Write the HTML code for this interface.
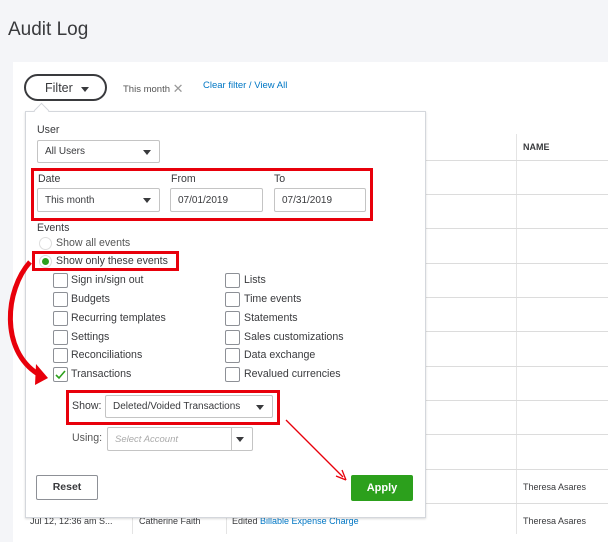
<!DOCTYPE html>
<html><head><style>
*{box-sizing:border-box;margin:0;padding:0}
body{width:608px;height:534px;overflow:hidden;background:#f4f5f8;font-family:"Liberation Sans",sans-serif;color:#393a3d;position:relative;font-size:10px}
.a{position:absolute}
.card{left:13px;top:62px;width:600px;height:480px;background:#fff}
.hl{height:1px;background:#dcdcdc;left:426px;width:182px}
.sel{border:1px solid #c4c4c4;border-radius:2px;background:#fff;font-size:10px;padding-left:7px;display:flex;align-items:center}
.tri{position:absolute;right:8px;top:50%;margin-top:-2px;border-left:4px solid transparent;border-right:4px solid transparent;border-top:5px solid #393a3d}
.cb{width:15px;height:15px;border:1px solid #8d9096;border-radius:2px;background:#fff}
.lab{font-size:10.6px;color:#393a3d}
.red{border:3px solid #e8000b}
</style></head><body>
<div class="a" style="left:8px;top:19px;font-size:19px;color:#393a3d">Audit Log</div>
<div class="a card"></div>
<div class="a" style="left:516px;top:134px;width:1px;height:400px;background:#e4e4e4"></div>
<div class="a" style="left:523px;top:142px;font-size:9px;font-weight:bold">NAME</div>
<div class="a hl" style="top:160px"></div><div class="a hl" style="top:194px"></div><div class="a hl" style="top:228px"></div><div class="a hl" style="top:263px"></div><div class="a hl" style="top:297px"></div><div class="a hl" style="top:331px"></div><div class="a hl" style="top:366px"></div><div class="a hl" style="top:400px"></div><div class="a hl" style="top:434px"></div><div class="a hl" style="top:469px"></div><div class="a hl" style="top:503px"></div>
<div class="a" style="left:523px;top:482px;font-size:9px">Theresa Asares</div>
<div class="a" style="left:523px;top:516px;font-size:9px">Theresa Asares</div>
<div class="a" style="left:132px;top:510px;width:1px;height:24px;background:#e4e4e4"></div>
<div class="a" style="left:226px;top:510px;width:1px;height:24px;background:#e4e4e4"></div>
<div class="a" style="left:30px;top:516px;font-size:9px">Jul 12, 12:36 am S...</div>
<div class="a" style="left:139px;top:516px;font-size:9px">Catherine Faith</div>
<div class="a" style="left:232px;top:516px;font-size:9px">Edited <span style="color:#0077c5">Billable Expense Charge</span></div>

<div class="a" style="left:24px;top:74px;width:83px;height:27px;border:2px solid #393a3d;border-radius:14px;font-size:12.5px;padding:5px 0 0 19px">Filter</div>
<div class="a tri" style="left:81px;right:auto;top:87px;margin:0"></div>
<div class="a" style="left:123px;top:80px;font-size:9.5px;color:#555">This month <span style="font-size:13px;color:#999;position:relative;top:1px">✕</span></div>
<div class="a" style="left:203px;top:80px;font-size:9.5px;color:#0077c5">Clear filter / View All</div>

<div class="a" style="left:25px;top:111px;width:401px;height:407px;border:1px solid #d4d7dc;background:#fff;box-shadow:0 1px 2px rgba(0,0,0,.15)"></div>
<div class="a" style="left:36px;top:105px;width:11px;height:11px;background:#fff;border-left:1px solid #d4d7dc;border-top:1px solid #d4d7dc;transform:rotate(45deg)"></div>

<div class="a lab" style="left:37px;top:124px">User</div>
<div class="a sel" style="left:37px;top:140px;width:123px;height:23px">All Users<span class="tri"></span></div>
<div class="a red" style="left:31px;top:168px;width:342px;height:53px"></div>
<div class="a lab" style="left:38px;top:173px">Date</div>
<div class="a lab" style="left:171px;top:173px">From</div>
<div class="a lab" style="left:274px;top:173px">To</div>
<div class="a sel" style="left:37px;top:188px;width:123px;height:24px">This month<span class="tri"></span></div>
<div class="a sel" style="left:170px;top:188px;width:93px;height:24px">07/01/2019</div>
<div class="a sel" style="left:274px;top:188px;width:92px;height:24px">07/31/2019</div>
<div class="a lab" style="left:37px;top:222px">Events</div>
<div class="a" style="left:39px;top:237px;width:13px;height:13px;border:1px solid #ddd;border-radius:50%"></div>
<div class="a lab" style="left:56px;top:237px;color:#555">Show all events</div>
<div class="a red" style="left:32px;top:251px;width:147px;height:20px"></div>
<div class="a" style="left:39px;top:255px;width:13px;height:13px;border:1px solid #ddd;border-radius:50%"></div>
<div class="a" style="left:42px;top:258px;width:7px;height:7px;background:#2ca01c;border-radius:50%"></div>
<div class="a lab" style="left:56px;top:255px">Show only these events</div>

<div class="a cb" style="left:53px;top:273px"></div><div class="a lab" style="left:71px;top:274px">Sign in/sign out</div>
<div class="a cb" style="left:53px;top:292px"></div><div class="a lab" style="left:71px;top:293px">Budgets</div>
<div class="a cb" style="left:53px;top:311px"></div><div class="a lab" style="left:71px;top:312px">Recurring templates</div>
<div class="a cb" style="left:53px;top:330px"></div><div class="a lab" style="left:71px;top:331px">Settings</div>
<div class="a cb" style="left:53px;top:348px"></div><div class="a lab" style="left:71px;top:349px">Reconciliations</div>
<div class="a cb" style="left:53px;top:367px"></div><div class="a lab" style="left:71px;top:368px">Transactions</div>
<svg class="a" style="left:53px;top:367px" width="15" height="15"><path d="M3 8l3 3 6-7" stroke="#2ca01c" stroke-width="1.6" fill="none"/></svg>
<div class="a cb" style="left:225px;top:273px"></div><div class="a lab" style="left:244px;top:274px">Lists</div>
<div class="a cb" style="left:225px;top:292px"></div><div class="a lab" style="left:244px;top:293px">Time events</div>
<div class="a cb" style="left:225px;top:311px"></div><div class="a lab" style="left:244px;top:312px">Statements</div>
<div class="a cb" style="left:225px;top:330px"></div><div class="a lab" style="left:244px;top:331px">Sales customizations</div>
<div class="a cb" style="left:225px;top:348px"></div><div class="a lab" style="left:244px;top:349px">Data exchange</div>
<div class="a cb" style="left:225px;top:367px"></div><div class="a lab" style="left:244px;top:368px">Revalued currencies</div>

<div class="a red" style="left:66px;top:390px;width:214px;height:35px"></div>
<div class="a lab" style="left:72px;top:400px">Show:</div>
<div class="a sel" style="left:105px;top:395px;width:168px;height:23px">Deleted/Voided Transactions<span class="tri"></span></div>
<div class="a lab" style="left:72px;top:432px;color:#555">Using:</div>
<div class="a sel" style="left:107px;top:427px;width:146px;height:24px;color:#aaa;font-style:italic;font-size:9.5px">Select Account<span class="a" style="left:123px;top:0;width:1px;height:22px;background:#c4c4c4"></span><span class="tri"></span></div>

<div class="a" style="left:36px;top:475px;width:62px;height:25px;border:1px solid #8d9096;border-radius:2px;font-size:10.5px;font-weight:bold;text-align:center;line-height:23px">Reset</div>
<div class="a" style="left:351px;top:475px;width:62px;height:26px;background:#2ca01c;border-radius:2px;font-size:11px;font-weight:bold;color:#fff;text-align:center;line-height:26px">Apply</div>

<svg class="a" style="left:0;top:0" width="608" height="534">
<path d="M30 262 C 5 290, 0 350, 38 374" stroke="#e8000b" stroke-width="5" fill="none"/>
<path d="M36 364 L48 378 L35 385 Z" fill="#e8000b"/>
<path d="M286 420 L343 477" stroke="#e8000b" stroke-width="1.3"/>
<path d="M346 480 L336 476 M346 480 L342 470" stroke="#e8000b" stroke-width="1.3"/>
</svg>
</body></html>
